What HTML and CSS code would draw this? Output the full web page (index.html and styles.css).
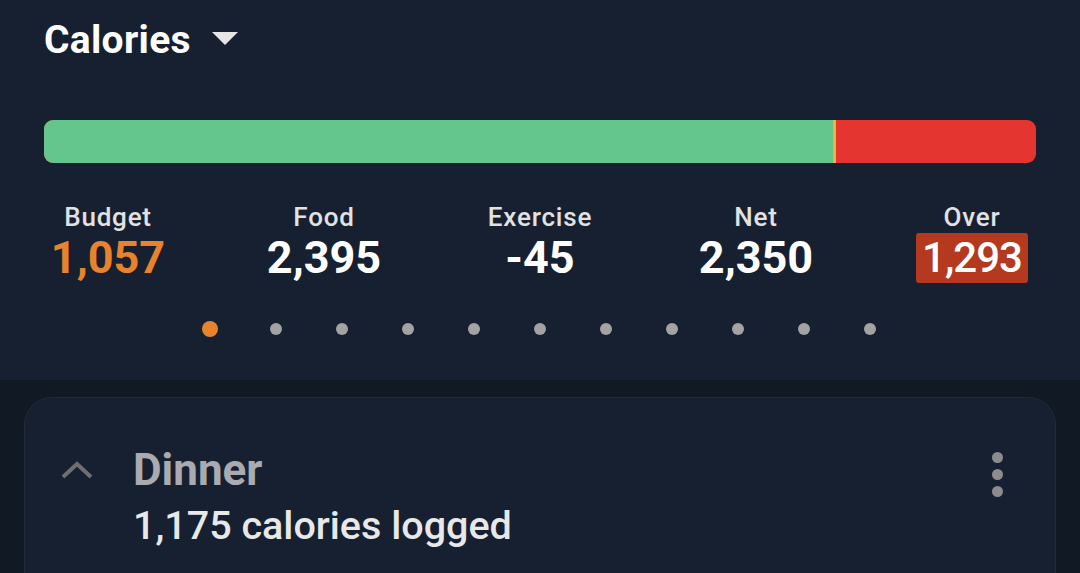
FILE: index.html
```html
<!DOCTYPE html>
<html lang="en">
<head>
    <meta charset="UTF-8">
    <meta name="viewport" content="width=device-width, initial-scale=1.0">
    <title>Diary</title>
    <link rel="stylesheet" href="styles.css">
</head>
<body>
    <section class="summary">
        <div class="summary-title">
            <h1>Calories</h1>
            <span class="caret"></span>
        </div>

        <div class="progress">
            <div class="progress-fill" style="width: 79.5%;"></div>
            <div class="progress-marker"></div>
            <div class="progress-over"></div>
        </div>

        <div class="stats">
            <div class="stat">
                <div class="stat-label">Budget</div>
                <div class="stat-value budget">1,057</div>
            </div>
            <div class="stat">
                <div class="stat-label">Food</div>
                <div class="stat-value">2,395</div>
            </div>
            <div class="stat">
                <div class="stat-label">Exercise</div>
                <div class="stat-value">-45</div>
            </div>
            <div class="stat">
                <div class="stat-label">Net</div>
                <div class="stat-value">2,350</div>
            </div>
            <div class="stat">
                <div class="stat-label">Over</div>
                <div class="stat-value over">1,293</div>
            </div>
        </div>

        <div class="pager">
            <span class="dot active"></span>
            <span class="dot"></span>
            <span class="dot"></span>
            <span class="dot"></span>
            <span class="dot"></span>
            <span class="dot"></span>
            <span class="dot"></span>
            <span class="dot"></span>
            <span class="dot"></span>
            <span class="dot"></span>
            <span class="dot"></span>
        </div>
    </section>

    <section class="meals">
        <div class="meal-card">
            <div class="meal-header">
                <svg class="chevron" width="34" height="20" viewBox="0 0 34 20">
                    <path d="M3 17 L17 4 L31 17" fill="none" stroke="#6f6f6f" stroke-width="4"/>
                </svg>
                <div class="meal-info">
                    <h2>Dinner</h2>
                    <p>1,175 calories logged</p>
                </div>
                <div class="kebab">
                    <span></span>
                    <span></span>
                    <span></span>
                </div>
            </div>
        </div>
    </section>
</body>
</html>
```

FILE: styles.css
```css
body {
    margin: 0;
    background: #111925;
    font-family: Roboto, "Noto Sans", sans-serif;
    color: #fff;
    height: 573px;
    overflow: hidden;
}

h1, h2, p {
    margin: 0;
}

.summary {
    background: #172030;
    height: 380px;
    padding-top: 18px;
    box-sizing: border-box;
}

.summary-title {
    display: flex;
    align-items: center;
    gap: 21px;
    padding-left: 44px;
    height: 44px;
}

.summary-title h1 {
    font-size: 39px;
    font-weight: 700;
    line-height: 44px;
    letter-spacing: 0.3px;
}

.caret {
    width: 0;
    height: 0;
    border-left: 13px solid transparent;
    border-right: 13px solid transparent;
    border-top: 13px solid #e6e6e6;
    margin-top: -4px;
}

.progress {
    display: flex;
    margin: 58px 44px 0 44px;
    height: 43px;
    border-radius: 9px;
    overflow: hidden;
    background: #e53530;
}

.progress-fill {
    background: #65c68d;
}

.progress-marker {
    width: 3px;
    background: #f2b13a;
}

.progress-over {
    flex: 1;
}

.stats {
    display: grid;
    grid-template-columns: repeat(5, 1fr);
    margin-top: 39px;
}

.stat {
    display: flex;
    flex-direction: column;
    align-items: center;
}

.stat-label {
    font-size: 26px;
    font-weight: 500;
    color: #e2e2e2;
    line-height: 30px;
    letter-spacing: 0.8px;
}

.stat-value {
    font-size: 45px;
    font-weight: 700;
    line-height: 50px;
    margin-top: 1px;
}

.stat-value.budget {
    color: #e8822c;
}

.stat-value.over {
    background: #b5391f;
    border-radius: 3px;
    padding: 0 6px;
    font-size: 42px;
    font-weight: 500;
    letter-spacing: -1px;
}

.pager {
    display: flex;
    justify-content: center;
    align-items: center;
    gap: 54px;
    margin-top: 38px;
}

.dot {
    width: 12px;
    height: 12px;
    border-radius: 50%;
    background: #a3a3a3;
}

.dot.active {
    width: 16px;
    height: 16px;
    margin: 0 -2px;
    background: #e8822c;
}

.meals {
    padding: 17px 24px 0 24px;
}

/* card runs on below the fold, so no bottom edge */
.meal-card {
    background: #172030;
    border: 1px solid #202a3a;
    border-bottom: 0;
    border-radius: 28px 28px 0 0;
    height: 175px;
}

.meal-header {
    display: flex;
    align-items: flex-start;
    padding: 46px 52px 0 35px;
}

.chevron {
    margin-top: 16px;
    flex: none;
}

.meal-info {
    flex: 1;
    margin-left: 39px;
}

.meal-info h2 {
    font-size: 44px;
    font-weight: 700;
    color: #a9abb0;
    line-height: 52px;
}

.meal-info p {
    font-size: 39.5px;
    font-weight: 500;
    color: #e8e8e8;
    line-height: 60px;
}

.kebab {
    display: flex;
    flex-direction: column;
    gap: 6px;
    margin-top: 8px;
}

.kebab span {
    width: 11px;
    height: 11px;
    border-radius: 50%;
    background: #8c8c8c;
}
```
